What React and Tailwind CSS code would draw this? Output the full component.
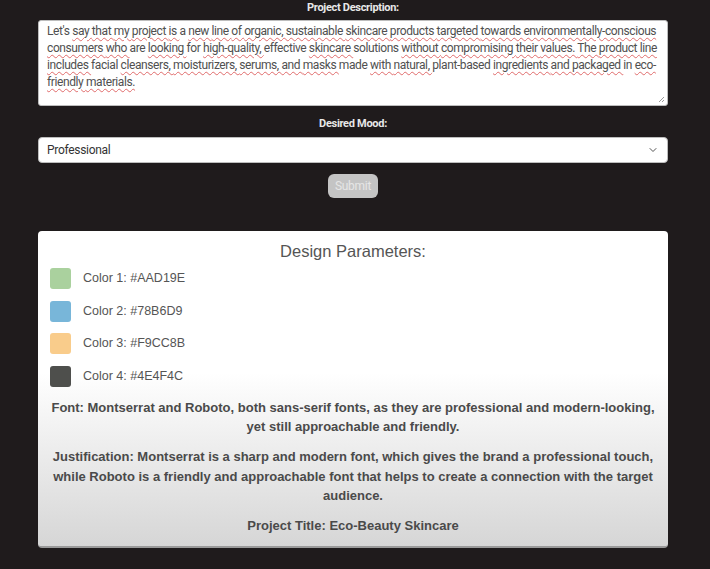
import { ChevronDown } from 'lucide-react'

const narrow = { fontFamily: 'Roboto, "Liberation Sans", sans-serif' }

const desc = [
  ["Let's", 0], ['say', 1], ['that', 1], ['my', 1], ['project', 1], ['is', 1], ['a', 0], ['new', 1], ['line', 1], ['of', 1],
  ['organic,', 1], ['sustainable', 1], ['skincare', 1], ['products', 1], ['targeted', 1], ['towards', 1],
  ['environmentally-conscious', 1], ['consumers', 1], ['who', 1], ['are', 0], ['looking', 1], ['for', 0],
  ['high-quality,', 1], ['effective', 0], ['skincare', 1], ['solutions', 0], ['without', 1], ['compromising', 1],
  ['their', 1], ['values.', 1], ['The', 1], ['product', 1], ['line', 1], ['includes', 1], ['facial', 0],
  ['cleansers,', 1], ['moisturizers,', 1], ['serums,', 1], ['and', 1], ['masks', 1], ['made', 0], ['with', 1],
  ['natural,', 1], ['plant-based', 0], ['ingredients', 1], ['and', 1], ['packaged', 1], ['in', 0], ['eco-friendly', 1],
  ['materials.', 1],
]

const colors = [
  ['Color 1: #AAD19E', 'bg-[#AAD19E]'],
  ['Color 2: #78B6D9', 'bg-[#78B6D9]'],
  ['Color 3: #F9CC8B', 'bg-[#F9CC8B]'],
  ['Color 4: #4E4F4C', 'bg-[#4E4F4C]'],
]

export default function App() {
  return (
    <div className="min-h-[569px] bg-[#1f1b1c] pl-[38px] pr-[42px] pb-[22px]" style={{ fontFamily: '"Liberation Sans", Arial, sans-serif' }}>
      <div className="text-center text-[11px] font-bold text-[#e8e8e8] leading-[14px] tracking-[-0.3px] pt-[1px] h-[20px]" style={narrow}>
        Project Description:
      </div>
      <div className="relative h-[86px] bg-white rounded-[3px] border border-[#bdbdbd] px-[8px] pt-[2px] text-[12px] leading-[17px] tracking-[-0.4px] text-[#505050]" style={narrow}>
        {desc.map(([w, u], i) => (
          <span key={i} className={u ? 'underline decoration-wavy decoration-[#e06b6b] decoration-1 underline-offset-[2px]' : ''}>
            {w + ' '}
          </span>
        ))}
        <svg className="absolute right-[2px] bottom-[2px]" width="7" height="7" viewBox="0 0 7 7">
          <path d="M6 1 L1 6 M6 4 L4 6" stroke="#999" strokeWidth="1" />
        </svg>
      </div>
      <div className="text-center text-[11px] font-bold text-[#e8e8e8] tracking-[-0.3px] pt-[10px] h-[31px]" style={narrow}>
        Desired Mood:
      </div>
      <div className="h-[26px] bg-white rounded-[4px] border border-[#bdbdbd] flex items-center justify-between pl-[8px] pr-[8px] text-[12px] tracking-[-0.3px] text-[#333]" style={narrow}>
        <span>Professional</span>
        <ChevronDown size={12} strokeWidth={2} className="text-[#555]" />
      </div>
      <div className="flex justify-center pt-[11px]">
        <div className="w-[50px] h-[24px] rounded-[6px] bg-[#c4c4c4] text-[#e6e6e6] text-[12px] tracking-[-0.3px] flex items-center justify-center" style={narrow}>
          Submit
        </div>
      </div>
      <div className="mt-[33px] rounded-[4px] bg-gradient-to-b from-white from-45% to-[#d6d6d6] border-b-2 border-[#9a9a9a] pt-[9px] pb-[10px] px-[12px] text-[#555]">
        <div className="text-center text-[16.5px] leading-[22px] text-[#555]">Design Parameters:</div>
        <div className="flex flex-col gap-[11.5px] mt-[6px]">
          {colors.map(([t, c]) => (
            <div key={t} className="flex items-center gap-[12px]">
              <div className={`w-[21px] h-[21px] rounded-[3px] ${c}`} />
              <span className="text-[12.5px]">{t}</span>
            </div>
          ))}
        </div>
        <p className="mt-[11px] text-center font-bold text-[13px] leading-[19.5px] text-[#4a4a4a]">
          Font: Montserrat and Roboto, both sans-serif fonts, as they are professional and modern-looking, yet still approachable and friendly.
        </p>
        <p className="mt-[10.5px] text-center font-bold text-[13px] leading-[19.5px] text-[#4a4a4a]">
          Justification: Montserrat is a sharp and modern font, which gives the brand a professional touch, while Roboto is a friendly and approachable font that helps to create a connection with the target audience.
        </p>
        <p className="mt-[10.5px] text-center font-bold text-[13px] leading-[19.5px] text-[#4a4a4a]">
          Project Title: Eco-Beauty Skincare
        </p>
      </div>
    </div>
  )
}
